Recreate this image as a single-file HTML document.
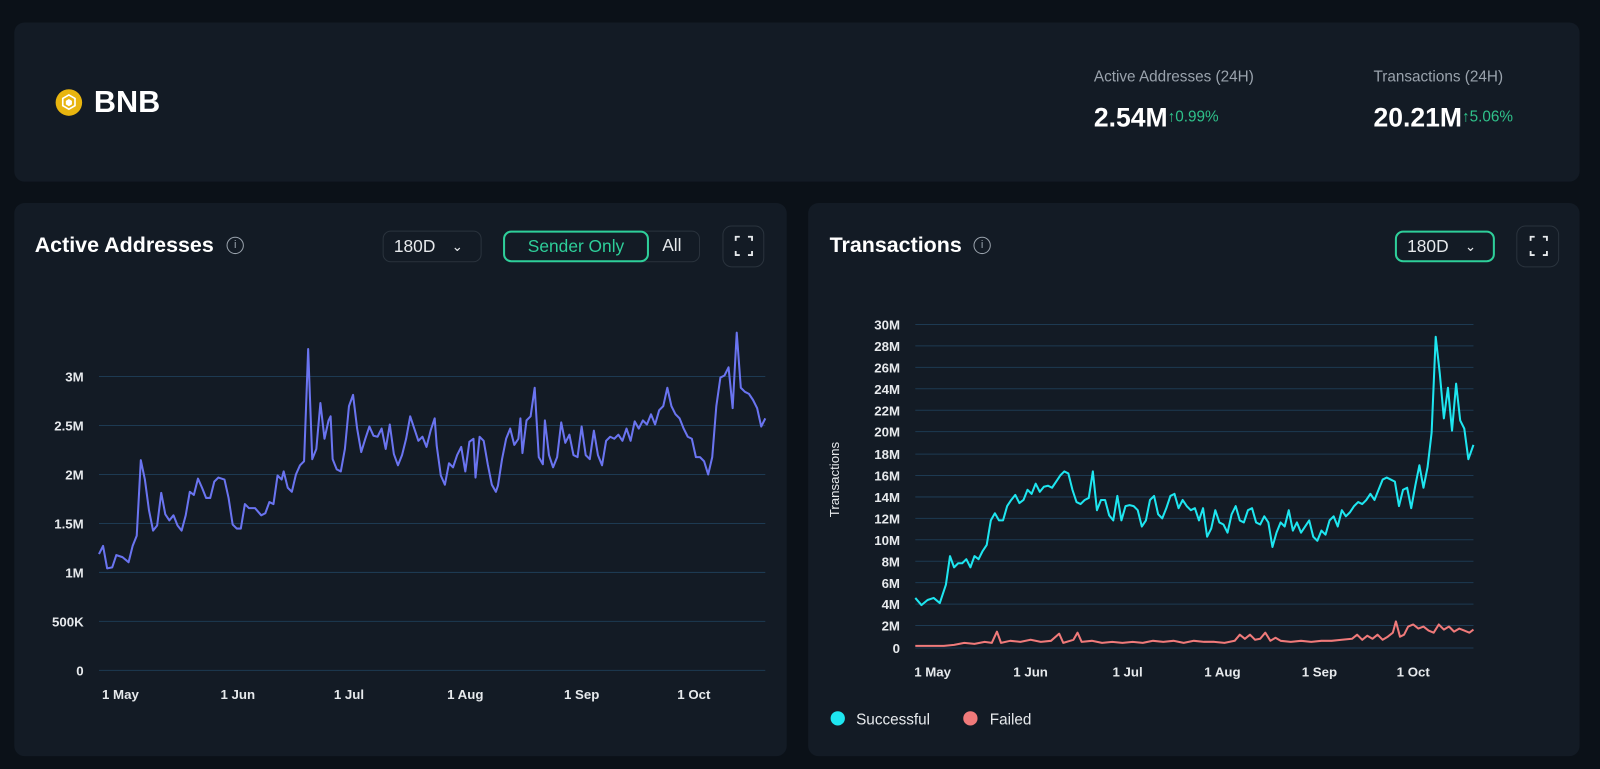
<!DOCTYPE html>
<html><head><style>
*{margin:0;padding:0;box-sizing:border-box}
body{width:1600px;height:769px;background:#0b1118;font-family:"Liberation Sans",sans-serif;color:#fff;position:relative;overflow:hidden}
#w{position:absolute;left:0;top:0;width:1568px;height:754px;transform:scale(1.0204);transform-origin:0 0}
.card{position:absolute;background:#131b25;border-radius:10px}
.abs{position:absolute;white-space:nowrap}
.btn{position:absolute;border:1px solid #2a333d;border-radius:8px;color:#e6e9ec;font-size:17px;display:flex;align-items:center}
.lbl{font-size:13px;fill:#e6e9ec;font-family:"Liberation Sans",sans-serif;font-weight:bold}
</style></head><body><div id="w">
<div class="card" style="left:14px;top:22px;width:1534px;height:156px"></div>
<div class="card" style="left:14px;top:199px;width:757px;height:542px"></div>
<div class="card" style="left:792px;top:199px;width:756px;height:542px"></div>

<svg class="abs" style="left:54px;top:87px" width="27" height="27" viewBox="0 0 27 27"><circle cx="13.5" cy="13.5" r="13" fill="#e8b50f"/><path d="M13.5 6l6 3.5v7l-6 3.5-6-3.5v-7z" fill="none" stroke="#fff" stroke-width="1.6"/><path d="M13.5 10l3 1.8v3.5l-3 1.8-3-1.8v-3.5z" fill="#fff"/></svg>
<div class="abs" style="left:92px;top:84px;font-size:30px;font-weight:bold">BNB</div>

<div class="abs" style="left:1072px;top:67px;font-size:15px;color:#9aa3ad">Active Addresses (24H)</div>
<div class="abs" style="left:1072px;top:100px;font-size:26px;font-weight:bold">2.54M<span style="font-size:15px;font-weight:normal;color:#2fc18a;vertical-align:5px">↑0.99%</span></div>
<div class="abs" style="left:1346px;top:67px;font-size:15px;color:#9aa3ad">Transactions (24H)</div>
<div class="abs" style="left:1346px;top:100px;font-size:26px;font-weight:bold">20.21M<span style="font-size:15px;font-weight:normal;color:#2fc18a;vertical-align:5px">↑5.06%</span></div>

<div class="abs" style="left:34px;top:229px;font-size:21px;font-weight:bold">Active Addresses</div>
<div class="abs" style="left:222px;top:232px;width:17px;height:17px;border:1.3px solid #9aa3ad;border-radius:50%;color:#9aa3ad;font-size:11px;text-align:center;line-height:15px">i</div>
<div class="btn" style="left:375px;top:226px;width:97px;height:31px;padding-left:10px">180D<span style="margin-left:16px;font-size:13px">&#8964;</span></div>
<div class="btn" style="left:493px;top:226px;width:193px;height:31px"></div>
<div class="btn" style="left:493px;top:226px;width:143px;height:31px;border:2px solid #2ecf9a;color:#2ecf9a;justify-content:center">Sender Only</div>
<div class="abs" style="left:649px;top:231px;font-size:17px;color:#e6e9ec">All</div>
<div class="btn" style="left:708px;top:221px;width:41px;height:41px;border-radius:9px"></div>

<div class="abs" style="left:813px;top:229px;font-size:21px;font-weight:bold">Transactions</div>
<div class="abs" style="left:954px;top:232px;width:17px;height:17px;border:1.3px solid #9aa3ad;border-radius:50%;color:#9aa3ad;font-size:11px;text-align:center;line-height:15px">i</div>
<div class="btn" style="left:1367px;top:226px;width:98px;height:31px;padding-left:10px;border:2px solid #2ecf9a">180D<span style="margin-left:16px;font-size:13px">&#8964;</span></div>
<div class="btn" style="left:1486px;top:221px;width:42px;height:41px;border-radius:9px"></div>

<svg class="abs" style="left:0;top:0" width="1568" height="754">
<g fill="none" stroke="#e6e9ec" stroke-width="1.8">
<path d="M721 236v-4h4M733 232h4v4M737 246v4h-4M725 250h-4v-4"/>
<path d="M1500 236v-4h4M1512 232h4v4M1516 246v4h-4M1504 250h-4v-4"/>
</g>
<g stroke="#1d3a52" stroke-width="1">
<path d="M97 369H750M97 417H750M97 465H750M97 513H750M97 561H750M97 609H750M97 657H750"/>
<path d="M897 318H1444M897 339H1444M897 360H1444M897 381H1444M897 402H1444M897 423H1444M897 445H1444M897 466H1444M897 487H1444M897 508H1444M897 529H1444M897 550H1444M897 571H1444M897 592H1444M897 613H1444M897 635H1444"/>
</g>
<g class="lbl" text-anchor="end">
<text x="82" y="374" class="lbl">3M</text><text x="82" y="422" class="lbl">2.5M</text><text x="82" y="470" class="lbl">2M</text><text x="82" y="518" class="lbl">1.5M</text><text x="82" y="566" class="lbl">1M</text><text x="82" y="614" class="lbl">500K</text><text x="82" y="662" class="lbl">0</text>
<text x="882" y="323" class="lbl">30M</text><text x="882" y="344" class="lbl">28M</text><text x="882" y="365" class="lbl">26M</text><text x="882" y="386" class="lbl">24M</text><text x="882" y="407" class="lbl">22M</text><text x="882" y="428" class="lbl">20M</text><text x="882" y="450" class="lbl">18M</text><text x="882" y="471" class="lbl">16M</text><text x="882" y="492" class="lbl">14M</text><text x="882" y="513" class="lbl">12M</text><text x="882" y="534" class="lbl">10M</text><text x="882" y="555" class="lbl">8M</text><text x="882" y="576" class="lbl">6M</text><text x="882" y="597" class="lbl">4M</text><text x="882" y="618" class="lbl">2M</text><text x="882" y="640" class="lbl">0</text>
</g>
<g text-anchor="middle">
<text x="118" y="685" class="lbl">1 May</text><text x="233" y="685" class="lbl">1 Jun</text><text x="342" y="685" class="lbl">1 Jul</text><text x="456" y="685" class="lbl">1 Aug</text><text x="570" y="685" class="lbl">1 Sep</text><text x="680" y="685" class="lbl">1 Oct</text>
<text x="914" y="663" class="lbl">1 May</text><text x="1010" y="663" class="lbl">1 Jun</text><text x="1105" y="663" class="lbl">1 Jul</text><text x="1198" y="663" class="lbl">1 Aug</text><text x="1293" y="663" class="lbl">1 Sep</text><text x="1385" y="663" class="lbl">1 Oct</text>
</g>
<text x="822" y="470" transform="rotate(-90 822 470)" text-anchor="middle" style="font-size:13px;fill:#e6e9ec;font-family:'Liberation Sans',sans-serif">Transactions</text>
<polyline fill="none" stroke="#6a74f0" stroke-width="2" stroke-linejoin="round" points="97,543 101,535 105,557 110,556 114,544 120,546 126,551 130,535 134,525 138,451 142,470 146,500 150,520 154,515 158,483 162,504 166,510 170,505 174,515 178,520 182,505 186,482 190,485 194,469 198,478 202,488 206,488 210,472 214,468 220,470 224,488 228,514 232,518 236,518 240,494 244,498 250,498 256,505 260,503 264,492 268,494 272,466 276,470 278,462 282,478 286,482 290,465 294,456 298,452 302,342 306,450 310,440 314,395 318,430 322,412 324,408 326,450 330,460 334,462 338,440 342,398 346,387 350,420 354,443 358,430 362,418 366,427 370,428 374,420 378,440 382,416 386,445 390,456 394,446 398,430 402,408 406,420 410,432 414,428 418,438 422,422 426,410 428,437 432,466 436,475 440,454 444,458 448,446 452,438 456,462 460,433 464,430 466,468 470,428 474,432 478,455 482,475 486,482 488,476 492,450 496,430 500,420 504,436 508,430 510,410 512,444 516,412 520,408 524,380 528,448 532,455 534,412 538,446 542,458 546,448 550,414 554,434 558,426 562,446 566,448 570,418 574,446 578,450 582,422 586,446 590,456 594,432 598,428 602,430 606,426 610,432 614,420 618,432 622,413 626,420 630,412 634,416 638,406 642,416 646,402 650,398 654,380 658,398 662,406 666,410 670,420 674,428 678,430 682,448 686,448 690,452 694,465 698,448 702,398 706,370 710,368 714,360 718,400 722,326 726,380 730,384 734,386 738,392 742,400 746,418 750,410"/>
<polyline fill="none" stroke="#1ee6f0" stroke-width="2" stroke-linejoin="round" points="897,586 903,593 909,588 915,586 921,591 927,573 931,545 935,556 939,552 943,552 947,548 951,556 955,545 959,548 963,540 967,534 971,510 975,503 979,510 983,510 987,496 991,490 995,485 999,493 1003,490 1007,480 1011,484 1015,474 1019,482 1023,477 1027,476 1031,478 1035,472 1039,466 1043,462 1047,464 1051,480 1055,492 1059,494 1063,490 1067,488 1071,462 1075,500 1079,490 1083,490 1087,505 1091,510 1095,486 1099,510 1103,496 1107,495 1111,496 1115,500 1119,516 1123,510 1127,490 1131,486 1135,504 1139,508 1143,498 1147,486 1151,484 1155,498 1159,490 1163,496 1167,500 1171,498 1175,510 1179,498 1183,526 1187,518 1191,500 1195,512 1199,514 1203,522 1207,504 1211,496 1215,510 1219,512 1223,500 1227,498 1231,512 1235,514 1239,506 1243,512 1247,536 1251,522 1255,512 1259,516 1263,500 1267,520 1271,512 1275,522 1279,516 1283,510 1287,526 1291,530 1295,520 1299,524 1303,510 1307,506 1311,516 1315,500 1319,506 1323,502 1327,496 1331,492 1335,494 1339,490 1343,484 1347,490 1351,480 1355,470 1359,468 1363,470 1367,472 1371,496 1375,480 1379,478 1383,498 1387,476 1391,456 1395,478 1399,458 1403,424 1407,330 1411,366 1415,410 1419,380 1423,422 1427,376 1431,412 1435,420 1439,450 1444,436"/>
<polyline fill="none" stroke="#f07a7a" stroke-width="2" stroke-linejoin="round" points="897,633 910,633 925,633 935,632 945,630 955,631 965,629 972,630 977,619 981,630 990,628 1000,629 1010,627 1020,629 1030,628 1038,621 1042,630 1052,627 1056,620 1060,629 1070,628 1080,630 1090,629 1100,630 1110,629 1120,630 1130,628 1140,629 1150,628 1160,630 1170,628 1180,629 1190,629 1200,630 1210,628 1215,622 1220,626 1225,622 1230,627 1235,626 1240,620 1245,628 1250,625 1255,628 1265,629 1275,628 1285,629 1295,628 1305,628 1315,627 1325,626 1330,622 1335,627 1340,623 1345,626 1350,622 1355,627 1360,624 1365,620 1368,609 1372,624 1376,622 1380,614 1385,612 1390,616 1395,614 1400,618 1405,620 1410,612 1415,617 1420,614 1425,619 1430,616 1435,618 1440,620 1444,617"/>
<circle cx="821" cy="704" r="7" fill="#1ee6f0"/><text x="839" y="710" style="font-size:15px;fill:#e6e9ec;font-family:'Liberation Sans',sans-serif">Successful</text>
<circle cx="951" cy="704" r="7" fill="#f07a7a"/><text x="970" y="710" style="font-size:15px;fill:#e6e9ec;font-family:'Liberation Sans',sans-serif">Failed</text>
</svg>
</div></body></html>
